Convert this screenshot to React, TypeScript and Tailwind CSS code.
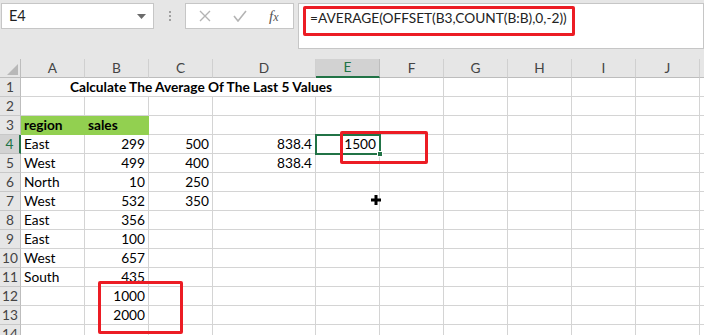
import React from "react";

const cols = ["A", "B", "C", "D", "E", "F", "G", "H", "I", "J"];
const widths = [64, 64, 64, 103, 64, 64, 64, 64, 64, 64];

type Cell = { t: string; right?: boolean; bold?: boolean; fill?: boolean };

const data: Record<number, Record<number, Cell>> = {
  3: { 0: { t: "region", bold: true, fill: true }, 1: { t: "sales", bold: true, fill: true } },
  4: { 0: { t: "East" }, 1: { t: "299", right: true }, 2: { t: "500", right: true }, 3: { t: "838.4", right: true }, 4: { t: "1500", right: true } },
  5: { 0: { t: "West" }, 1: { t: "499", right: true }, 2: { t: "400", right: true }, 3: { t: "838.4", right: true } },
  6: { 0: { t: "North" }, 1: { t: "10", right: true }, 2: { t: "250", right: true } },
  7: { 0: { t: "West" }, 1: { t: "532", right: true }, 2: { t: "350", right: true } },
  8: { 0: { t: "East" }, 1: { t: "356", right: true } },
  9: { 0: { t: "East" }, 1: { t: "100", right: true } },
  10: { 0: { t: "West" }, 1: { t: "657", right: true } },
  11: { 0: { t: "South" }, 1: { t: "435", right: true } },
  12: { 1: { t: "1000", right: true } },
  13: { 1: { t: "2000", right: true } },
};

function Row({ n }: { n: number }) {
  const sel = n === 4;
  const row = data[n] || {};
  return (
    <div className="flex h-[19px]">
      <div
        className={
          sel
            ? "w-[21px] shrink-0 flex items-center justify-center bg-[#d2d2d2] text-[#217346] border-r-2 border-r-[#217346] border-b border-b-[#c0c0c0]"
            : "w-[21px] shrink-0 flex items-center justify-center bg-[#e6e6e6] text-[#444] border-r border-r-[#bdbdbd] border-b border-b-[#c8c8c8]"
        }
      >
        {n}
      </div>
      {n === 1 ? (
        <>
          <div className="w-[359px] shrink-0 flex items-center justify-center border-r border-b border-[#d4d4d4] font-bold pl-[2px]">
            Calculate The Average Of The Last 5 Values
          </div>
          {widths.slice(5).map((w, i) => (
            <div key={i} style={{ width: w }} className="shrink-0 border-r border-b border-[#d4d4d4]" />
          ))}
        </>
      ) : (
        widths.map((w, i) => {
          const c = row[i];
          return (
            <div
              key={i}
              style={{ width: w }}
              className={
                "shrink-0 flex items-center px-[3px] whitespace-nowrap border-r border-b " +
                (c?.fill ? "bg-[#92d050] border-[#92d050] " : "border-[#d4d4d4] ") +
                (c?.right ? "justify-end " : "") +
                (c?.bold ? "font-bold " : "")
              }
            >
              {c?.t}
            </div>
          );
        })
      )}
      <div className="flex-1 border-b border-[#d4d4d4]" />
    </div>
  );
}

export default function App() {
  return (
    <div className="relative w-[704px] h-[335px] overflow-hidden bg-white text-[13.7px] text-black" style={{ fontFamily: "Lato, 'Open Sans', sans-serif" }}>
      {/* formula bar */}
      <div className="flex items-start h-[59px] bg-[#e6e6e6] pt-[3px] pl-[1px]">
        <div className="w-[153px] h-[26px] bg-white border border-[#c6c6c6] flex items-center justify-between pl-[7px] pr-[7px] text-[#222] text-[14.5px]">
          <span>E4</span>
          <svg width="9" height="5" viewBox="0 0 9 5"><path d="M0 0h9L4.5 5z" fill="#6b6b6b" /></svg>
        </div>
        <div className="w-[31px] h-[26px] flex flex-col items-center justify-center gap-[2px]">
          <span className="w-[2px] h-[2px] bg-[#a0a0a0]" />
          <span className="w-[2px] h-[2px] bg-[#a0a0a0]" />
          <span className="w-[2px] h-[2px] bg-[#a0a0a0]" />
        </div>
        <div className="w-[109px] h-[26px] bg-white border border-[#c6c6c6] flex items-center">
          <svg className="ml-[13px]" width="12" height="12" viewBox="0 0 12 12"><path d="M1 1l10 10M11 1L1 11" stroke="#b4b4b4" strokeWidth="1.4" /></svg>
          <svg className="ml-[22px]" width="14" height="12" viewBox="0 0 14 12"><path d="M1 6l4 5 8-10" stroke="#b4b4b4" strokeWidth="1.6" fill="none" /></svg>
          <span className="ml-[22px] italic text-[#555] text-[15px]" style={{ fontFamily: "'Liberation Serif', serif" }}>
            f<span className="text-[12px]">x</span>
          </span>
        </div>
        <div className="ml-[4px] flex-1 h-[46px] bg-white border border-[#c6c6c6] pl-[11px] pt-[4px] text-[#222] whitespace-nowrap">
          =AVERAGE(OFFSET(B3,COUNT(B:B),0,-2))
        </div>
      </div>

      {/* column headers */}
      <div className="flex h-[19px] bg-[#e6e6e6] text-[#444]">
        <div className="w-[21px] shrink-0 relative border-r border-b border-[#bdbdbd]">
          <svg className="absolute right-[2px] bottom-[2px]" width="11" height="11" viewBox="0 0 11 11"><path d="M11 0v11H0z" fill="#b8b8b8" /></svg>
        </div>
        {cols.map((c, i) =>
          c === "E" ? (
            <div key={c} style={{ width: widths[i] }} className="shrink-0 flex items-center justify-center bg-[#d2d2d2] text-[#217346] border-r border-r-[#bdbdbd] border-b-2 border-b-[#217346]">
              {c}
            </div>
          ) : (
            <div key={c} style={{ width: widths[i] }} className="shrink-0 flex items-center justify-center border-r border-r-[#d0d0d0] border-b border-b-[#bdbdbd]">
              {c}
            </div>
          )
        )}
        <div className="flex-1 border-b border-[#bdbdbd]" />
      </div>

      {/* rows */}
      {Array.from({ length: 14 }, (_, i) => (
        <Row key={i} n={i + 1} />
      ))}

      {/* selected cell E4 */}
      <div className="absolute left-[315px] top-[134px] w-[66px] h-[21px] border-2 border-[#217346]" />
      <div className="absolute left-[377px] top-[151px] w-[6px] h-[6px] bg-[#217346] border border-white" />

      {/* cursor */}
      <svg className="absolute left-[371px] top-[195px]" width="10" height="10" viewBox="0 0 10 10">
        <path d="M3.5 0h3v3.5H10v3H6.5V10h-3V6.5H0v-3h3.5z" fill="#000" />
      </svg>

      {/* red annotation boxes */}
      <div className="absolute left-[303px] top-[6px] w-[272px] h-[30px] border-[3px] border-[#ec1c24] rounded-[2px]" />
      <div className="absolute left-[340px] top-[131px] w-[88px] h-[33px] border-[3px] border-[#ec1c24] rounded-[2px]" />
      <div className="absolute left-[98px] top-[281px] w-[85px] h-[53px] border-[3px] border-[#ec1c24] rounded-[2px]" />
    </div>
  );
}
